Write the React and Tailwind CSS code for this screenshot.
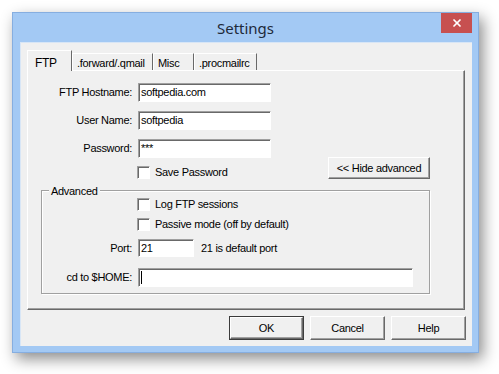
import { X } from "lucide-react"

const sunken = "bg-white border border-t-[#a0a0a0] border-l-[#a0a0a0] border-b-white border-r-white shadow-[inset_1px_1px_0_#696969]"
const raised = "bg-[#f0f0f0] border border-t-white border-l-white border-b-[#696969] border-r-[#696969] shadow-[inset_-1px_-1px_0_#a0a0a0]"

function Field({ label, value, width = "w-[133px]", height = "h-[19px]", after, caret }) {
  return (
    <div className="flex items-center">
      <div className="w-[105px] text-right pr-[1px]">{label}</div>
      <div className={`ml-[5px] ${width} ${height} ${sunken} flex items-center pl-[2px]`}>
        {value}
        {caret && <span className="w-px h-[13px] bg-black" />}
      </div>
      {after}
    </div>
  )
}

function Check({ label, className = "" }) {
  return (
    <div className={`flex items-center h-[13px] ${className}`}>
      <div className={`w-[13px] h-[13px] ${sunken}`} />
      <span className="ml-[5px] leading-[13px]">{label}</span>
    </div>
  )
}

function Tab({ label, active, width }) {
  if (active) {
    return (
      <div className={`${width} h-[21px] -mb-px z-10 border border-b-0 border-t-white border-l-white border-r-[#696969] bg-[#f0f0f0] pl-[7px] pt-[3px] text-[12px]`}>
        {label}
      </div>
    )
  }
  return (
    <div className={`${width} h-[17px] mt-[3px] border border-b-0 border-t-white border-l-white border-r-[#696969] bg-[#f0f0f0] pl-[4px] pt-[1px]`}>
      {label}
    </div>
  )
}

export default function App() {
  return (
    <div className="w-[499px] h-[374px] bg-white relative overflow-hidden text-[11px] tracking-[-0.3px] text-black" style={{ fontFamily: '"Liberation Sans", Arial, sans-serif' }}>
      <div className="absolute left-[12px] top-[12px] w-[467px] h-[341px] bg-[#a3c9f4] border border-[#86aee0] shadow-[4px_6px_14px_rgba(0,0,0,0.45)] flex flex-col">
        {/* title bar */}
        <div className="h-[29px] flex items-start relative">
          <div className="flex-1 text-center text-[15px] tracking-normal text-[#1e2a3a] pt-[4px]" style={{ fontFamily: '"Segoe UI", "Noto Sans", sans-serif' }}>Settings</div>
          <div className="absolute right-[6px] top-0 w-[31px] h-[20px] bg-[#c75050] flex items-center justify-center">
            <X size={12} strokeWidth={3.5} color="white" />
          </div>
        </div>
        {/* client */}
        <div className="ml-[7px] w-[452px] h-[304px] bg-[#f0f0f0] border-t border-l border-[#d8e6f6] flex flex-col">
          {/* tabs */}
          <div className="flex items-end ml-[6px] mt-[6px] h-[21px]">
            <Tab label="FTP" active width="w-[45px]" />
            <Tab label=".forward/.qmail" width="w-[81px]" />
            <Tab label="Misc" width="w-[41px]" />
            <Tab label=".procmailrc" width="w-[63px]" />
          </div>
          {/* pane */}
          <div className="ml-[6px] w-[438px] h-[240px] border border-t-white border-l-white border-b-[#696969] border-r-[#696969] shadow-[inset_-1px_-1px_0_#a0a0a0] flex flex-col pt-[12px]">
            <div className="flex flex-col gap-[9px]">
              <Field label="FTP Hostname:" value="softpedia.com" />
              <Field label="User Name:" value="softpedia" />
              <Field label="Password:" value="***" />
            </div>
            <div className="flex items-start h-[13px] mt-[8px]">
              <Check label="Save Password" className="ml-[109px]" />
              <div className={`ml-auto mr-[34px] -mt-[9px] w-[102px] h-[22px] ${raised} flex items-center justify-center shrink-0`}>
                &lt;&lt; Hide advanced
              </div>
            </div>
            {/* advanced group */}
            <div className="relative ml-[13px] mt-[11px] w-[389px] h-[104px] border border-[#a0a0a0] shadow-[inset_1px_1px_0_white,1px_1px_0_white] pt-[7px]">
              <div className="absolute left-[7px] -top-[8px] bg-[#f0f0f0] px-[2px]">Advanced</div>
              <Check label="Log FTP sessions" className="ml-[95px]" />
              <Check label="Passive mode (off by default)" className="ml-[95px] mt-[7px]" />
              <div className="-ml-[14px] mt-[8px] flex flex-col gap-[11px]">
                <Field label="Port:" value="21" width="w-[56px]" height="h-[18px]" after={<span className="ml-[7px]">21 is default port</span>} />
                <Field label="cd to $HOME:" value="" width="w-[275px]" caret />
              </div>
            </div>
          </div>
          {/* buttons */}
          <div className="flex ml-[208px] mt-[6px] gap-[6px]">
            <div className="w-[75px] h-[24px] border border-[#3c3c3c] flex">
              <div className={`flex-1 ${raised} flex items-center justify-center`}>OK</div>
            </div>
            <div className={`w-[75px] h-[24px] ${raised} flex items-center justify-center`}>Cancel</div>
            <div className={`w-[75px] h-[24px] ${raised} flex items-center justify-center`}>Help</div>
          </div>
        </div>
      </div>
    </div>
  )
}
